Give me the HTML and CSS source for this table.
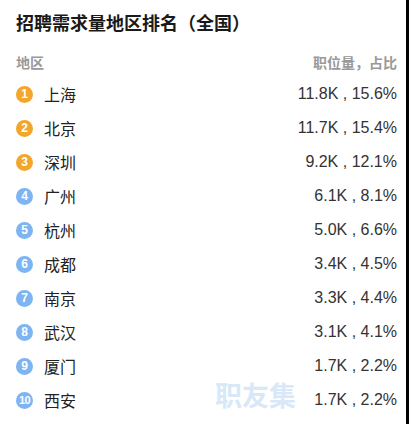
FILE: index.html
```html
<!DOCTYPE html>
<html lang="zh">
<head>
<meta charset="utf-8">
<link rel="stylesheet" href="styles.css">
</head>
<body>
<div class="page">
  <h1 class="title">招聘需求量地区排名（全国）</h1>
  <div class="head"><span>地区</span><span>职位量，占比</span></div>
  <ul class="list">
    <li class="row"><span class="city"><i class="badge top">1</i>上海</span><span class="val">11.8K , 15.6%</span></li>
    <li class="row"><span class="city"><i class="badge top">2</i>北京</span><span class="val">11.7K , 15.4%</span></li>
    <li class="row"><span class="city"><i class="badge top">3</i>深圳</span><span class="val">9.2K , 12.1%</span></li>
    <li class="row"><span class="city"><i class="badge">4</i>广州</span><span class="val">6.1K , 8.1%</span></li>
    <li class="row"><span class="city"><i class="badge">5</i>杭州</span><span class="val">5.0K , 6.6%</span></li>
    <li class="row"><span class="city"><i class="badge">6</i>成都</span><span class="val">3.4K , 4.5%</span></li>
    <li class="row"><span class="city"><i class="badge">7</i>南京</span><span class="val">3.3K , 4.4%</span></li>
    <li class="row"><span class="city"><i class="badge">8</i>武汉</span><span class="val">3.1K , 4.1%</span></li>
    <li class="row"><span class="city"><i class="badge">9</i>厦门</span><span class="val">1.7K , 2.2%</span></li>
    <li class="row"><span class="city"><i class="badge small">10</i>西安</span><span class="val">1.7K , 2.2%</span></li>
  </ul>
  <div class="watermark">职友集</div>
</div>
</body>
</html>
```
FILE: styles.css
```css
html, body {
  margin: 0;
  padding: 0;
  background: #fff;
}
.page {
  position: relative;
  width: 409px;
  height: 424px;
  box-sizing: border-box;
  border-right: 3px solid #000;
  padding: 10px 9px 0 16px;
  font-family: "Liberation Sans", "Noto Sans CJK SC", sans-serif;
  overflow: hidden;
}
.title {
  margin: 0;
  font-size: 18px;
  line-height: 24px;
  font-weight: bold;
  color: #1a1a1a;
  font-family: "Noto Sans CJK SC", sans-serif;
}
.head {
  display: flex;
  justify-content: space-between;
  margin-top: 18px;
  font-size: 14px;
  line-height: 20px;
  color: #999;
  font-weight: bold;
  font-family: "Noto Sans CJK SC", sans-serif;
}
.list {
  list-style: none;
  margin: 5px 0 0;
  padding: 0;
}
.row {
  display: flex;
  justify-content: space-between;
  align-items: center;
  height: 34px;
}
.city {
  display: flex;
  align-items: center;
  gap: 11px;
  font-size: 16px;
  color: #222;
  font-family: "Noto Sans CJK SC", sans-serif;
}
.badge {
  display: flex;
  align-items: center;
  justify-content: center;
  width: 17px;
  height: 17px;
  border-radius: 50%;
  background: #7db4f2;
  color: #fff;
  font-style: normal;
  font-size: 12px;
  font-weight: bold;
  font-family: "Liberation Sans", sans-serif;
}
.badge.top {
  background: #f4a62a;
}
.badge.small {
  font-size: 11px;
  letter-spacing: -0.5px;
}
.val {
  font-size: 16px;
  color: #333;
  font-family: "Liberation Sans", sans-serif;
}
.watermark {
  position: absolute;
  left: 215px;
  top: 380px;
  font-size: 27px;
  line-height: 30px;
  font-weight: bold;
  color: #d9e8f8;
  font-family: "Noto Sans CJK SC", sans-serif;
}
```
